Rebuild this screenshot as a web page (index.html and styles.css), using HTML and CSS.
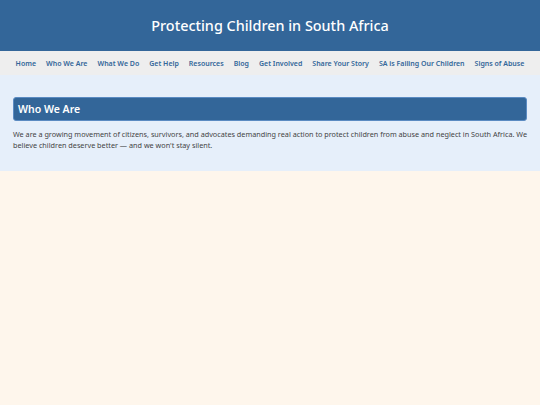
FILE: index.html
```html
<!DOCTYPE html>
<html lang="en">
<head>
<meta charset="utf-8">
<title>Protecting Children in South Africa</title>
<link rel="stylesheet" href="styles.css">
</head>
<body>
<header class="site-header">
  <h1 class="site-title">Protecting Children in South Africa</h1>
</header>
<nav class="main-nav">
  <a href="#">Home</a>
  <a href="#">Who We Are</a>
  <a href="#">What We Do</a>
  <a href="#">Get Help</a>
  <a href="#">Resources</a>
  <a href="#">Blog</a>
  <a href="#">Get Involved</a>
  <a href="#">Share Your Story</a>
  <a href="#">SA is Failing Our Children</a>
  <a href="#">Signs of Abuse</a>
</nav>
<main>
  <section class="about">
    <h2 class="section-heading">Who We Are</h2>
    <p class="section-text">We are a growing movement of citizens, survivors, and advocates demanding real action to protect children from abuse and neglect in South Africa. We believe children deserve better — and we won't stay silent.</p>
  </section>
</main>
</body>
</html>
```

FILE: styles.css
```css
html, body {
  margin: 0;
  padding: 0;
}
body {
  background: #fef6ec;
  font-family: "Noto Sans", "DejaVu Sans", sans-serif;
  color: #444;
}
.site-header {
  background: #336699;
  height: 51px;
  display: flex;
  align-items: center;
  justify-content: center;
}
.site-title {
  margin: 0;
  color: #fff;
  font-size: 14.4px;
  font-weight: 500;
}
.main-nav {
  background: #eeeeee;
  height: 24px;
  display: flex;
  align-items: center;
  justify-content: center;
  gap: 10px;
}
.main-nav a {
  color: #336699;
  font-size: 7px;
  font-weight: 600;
  text-decoration: none;
}
.about {
  background: #e6effa;
  padding: 22px 13px 20px;
}
.section-heading {
  margin: 0;
  background: #336699;
  color: #fff;
  font-size: 10.5px;
  font-weight: 600;
  border: 1px solid #5b8bc2;
  border-radius: 3px;
  height: 24px;
  box-sizing: border-box;
  display: flex;
  align-items: center;
  padding: 0 4px;
}
.section-text {
  margin: 8px 0 0;
  font-size: 7.25px;
  line-height: 11px;
  color: #444;
}
```
